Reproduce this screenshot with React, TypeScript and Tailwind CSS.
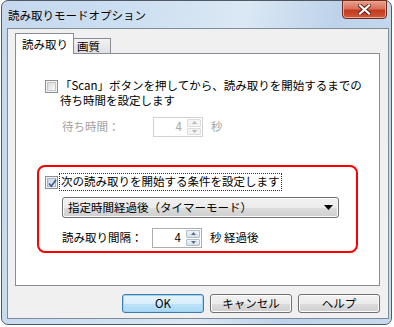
const jp = "font-['Noto_Sans_CJK_JP','Noto_Sans',sans-serif]";

function CheckBox({ checked }: { checked?: boolean }) {
  return (
    <span className="relative flex h-[13px] w-[13px] shrink-0 items-center justify-center border border-[#8e8f8f] bg-[#f4f4f4]">
      <span
        className={
          checked
            ? "h-[9px] w-[9px] border border-[#a7b6cf] bg-[linear-gradient(135deg,#c9d4e6,#eef2f9)]"
            : "h-[9px] w-[9px] border border-[#c6c6c6] bg-[linear-gradient(135deg,#d9d9d9,#fbfbfb)]"
        }
      />
      {checked && (
        <svg className="absolute left-[1px] top-[1px]" width="11" height="11" viewBox="0 0 11 11">
          <path d="M2 5.5 L4.3 8.2 L9 1.8" fill="none" stroke="#3f5a92" strokeWidth="1.7" />
        </svg>
      )}
    </span>
  );
}

function Spin({ disabled }: { disabled?: boolean }) {
  const arrow = disabled ? "#b8b8b8" : "#5a6f8e";
  return (
    <div
      className={`flex h-[20px] w-[50px] border bg-white ${
        disabled ? "border-[#d2d2d2] text-[#a3a3a3]" : "border-[#a9adb4] text-black"
      }`}
    >
      <div className="flex flex-1 items-center justify-end pr-[5px] text-[11.5px]">4</div>
      <div className="my-[1px] mr-[1px] flex w-[14px] flex-col gap-[1px]">
        {[0, 1].map((i) => (
          <div
            key={i}
            className={`flex flex-1 items-center justify-center rounded-[1px] border ${
              disabled
                ? "border-[#dcdcdc] bg-[#f4f4f4]"
                : "border-[#b4bfcc] bg-[linear-gradient(to_bottom,#eef3f9,#d4dfeb)]"
            }`}
          >
            <svg width="5" height="3" viewBox="0 0 5 3">
              <path d={i === 0 ? "M0 3 L2.5 0 L5 3 Z" : "M0 0 L5 0 L2.5 3 Z"} fill={arrow} />
            </svg>
          </div>
        ))}
      </div>
    </div>
  );
}

function Button({ label, primary }: { label: string; primary?: boolean }) {
  return (
    <div
      className={`flex h-[19px] w-[82px] items-center justify-center rounded-[3px] border text-[11.5px] text-black ${
        primary
          ? "border-[#3d7bad] bg-[linear-gradient(to_bottom,#e5f4fc_0%,#d9eefb_50%,#bfe3f8_51%,#a9d8f3_100%)] shadow-[inset_0_0_0_1px_#9fd5f3]"
          : "border-[#707070] bg-[linear-gradient(to_bottom,#f2f2f2_0%,#ebebeb_50%,#dddddd_51%,#cfcfcf_100%)] shadow-[inset_0_0_0_1px_#fcfcfc]"
      }`}
    >
      {label}
    </div>
  );
}

export default function App() {
  return (
    <div className={`h-[327px] w-[394px] bg-white ${jp}`}>
      <div className="ml-[1px] flex h-[325px] w-[391px] flex-col rounded-[7px] border border-[#505a66] bg-[linear-gradient(100deg,#c5d8ee_0%,#cddff1_30%,#dbe8f4_55%,#bed3ea_75%,#c7daee_100%)]">
        {/* title bar */}
        <div className="flex h-[27px] shrink-0 items-start justify-between">
          <span className="pl-[6px] pt-[6px] text-[11.5px] leading-[16px] text-black">
            読み取りモードオプション
          </span>
          <div className="-mt-[1px] mr-[4px] flex h-[19px] w-[45px] items-center justify-center rounded-b-[4px] border border-[#6e2a1c] bg-[linear-gradient(to_bottom,#e8a08e_0%,#d9705a_45%,#c4391f_55%,#d0583c_100%)] shadow-[inset_0_0_0_1px_#eba996]">
            <svg width="13" height="11" viewBox="0 0 13 11">
              <path d="M2 1.5 L11 9.5 M11 1.5 L2 9.5" stroke="#5a2217" strokeWidth="4" strokeLinecap="square" />
              <path d="M2 1.5 L11 9.5 M11 1.5 L2 9.5" stroke="#ffffff" strokeWidth="2.2" strokeLinecap="square" />
            </svg>
          </div>
        </div>

        {/* client area */}
        <div className="mb-[5px] ml-[5px] mr-[2px] flex flex-1 flex-col border border-[#7d8b9a] bg-[#f0f0f0] pl-[7px] pr-[8px] pt-[4px] pb-[5px]">
          {/* tabs */}
          <div className="relative z-10 -mb-[1px] flex h-[21px] items-end text-[11.5px] text-black">
            <div className="flex h-[21px] w-[59px] items-start border-x border-t border-[#898c95] bg-white pl-[6px] pt-[2px]">
              読み取り
            </div>
            <div className="mb-[1px] flex h-[15px] w-[37px] items-center border-r border-t border-[#898c95] bg-[linear-gradient(to_bottom,#f3f3f3,#e0e0e0)] pl-[3px] pt-[1px]">
              画質
            </div>
          </div>

          {/* panel */}
          <div className="flex h-[233px] flex-col border border-[#898c95] bg-white text-[11.5px] text-black">
            <div className="flex pl-[29px] pt-[24px]">
              <div className="mt-[2px]">
                <CheckBox />
              </div>
              <div className="ml-[2px] flex flex-col leading-[15px]">
                <span>「Scan」ボタンを押してから、読み取りを開始するまでの</span>
                <span>待ち時間を設定します</span>
              </div>
            </div>
            <div className="ml-[46px] mt-[9px] flex items-center">
              <span className="w-[91px] text-[#a3a3a3]">待ち時間：</span>
              <Spin disabled />
              <span className="ml-[8px] text-[#a3a3a3]">秒</span>
            </div>

            {/* highlighted group */}
            <div className="ml-[21px] mt-[28px] flex h-[88px] w-[321px] flex-col rounded-[8px] border-2 border-[#ff0000] pl-[6px] pt-[6px] pb-[3px]">
              <div className="flex h-[18px] items-center">
                <CheckBox checked />
                <span className="ml-[1px] flex h-[18px] items-center border border-dotted border-[#333] px-[1px]">
                  次の読み取りを開始する条件を設定します
                </span>
              </div>
              <div className="ml-[17px] mt-[6px] flex h-[21px] w-[277px] items-center justify-between rounded-[3px] border border-[#707070] bg-[linear-gradient(to_bottom,#f2f2f2_0%,#ebebeb_50%,#dddddd_51%,#cfcfcf_100%)] pl-[5px] pr-[5px] shadow-[inset_0_0_0_1px_#fbfbfb]">
                <span>指定時間経過後（タイマーモード）</span>
                <svg width="9" height="5" viewBox="0 0 9 5">
                  <path d="M0 0 L9 0 L4.5 5 Z" fill="#000" />
                </svg>
              </div>
              <div className="ml-[17px] mt-[10px] flex items-center">
                <span className="w-[90px]">読み取り間隔：</span>
                <Spin />
                <span className="ml-[8px]">秒 経過後</span>
              </div>
            </div>
          </div>

          {/* buttons */}
          <div className="mt-[8px] flex justify-end gap-[6px]">
            <Button label="OK" primary />
            <Button label="キャンセル" />
            <Button label="ヘルプ" />
          </div>
        </div>
      </div>
    </div>
  );
}
